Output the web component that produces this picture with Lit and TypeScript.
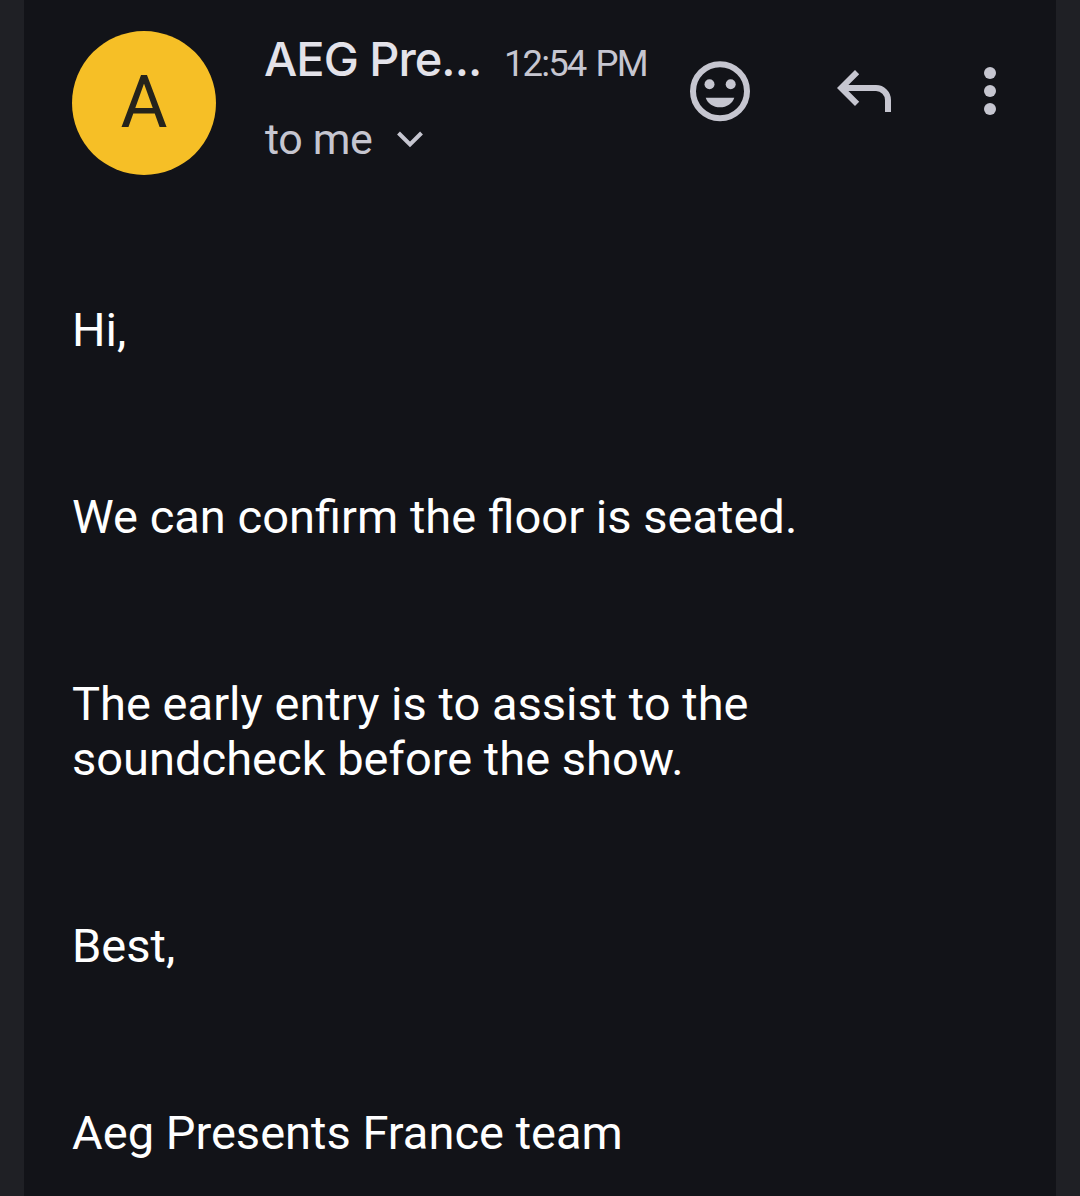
import { LitElement, html, css } from "lit";
import { customElement } from "lit/decorators.js";

const paragraphs = [
  "Hi,",
  "We can confirm the floor is seated.",
  "The early entry is to assist to the soundcheck before the show.",
  "Best,",
  "Aeg Presents France team",
];

@customElement("app-root")
class AppRoot extends LitElement {
  static styles = css`
    :host { display: block; height: 1196px; background: #1f2025; overflow: hidden; font-family: Roboto, sans-serif; }
    .card { box-sizing: border-box; margin: 0 24px; height: 1196px; background: #121318; padding: 31px 30px 0 48px; }
    header { display: flex; height: 144px; }
    .avatar { width: 144px; height: 144px; flex: none; border-radius: 50%; background: #f6bf26; color: #24231c; display: flex; align-items: center; justify-content: center; font-size: 72px; line-height: 144px; }
    .who { margin-left: 48px; flex: 1; min-width: 0; }
    .line { display: flex; align-items: baseline; white-space: nowrap; height: 60px; line-height: 60px; margin-top: -2px; }
    .name { color: #e3e2e9; font: 500 47px/60px Inter, sans-serif; letter-spacing: -1px; width: 240px; flex: none; }
    .time { color: #c6c6d0; font-size: 36.5px; letter-spacing: -1.9px; word-spacing: 3px; }
    .to { display: flex; align-items: center; gap: 24px; color: #c6c6d0; font-size: 43px; letter-spacing: -0.4px; line-height: 60px; margin: 20px 0 0 1px; white-space: nowrap; }
    svg { display: block; flex: none; fill: #c6c6d0; }
    .chevron { fill: none; stroke: #c6c6d0; stroke-width: 4; }
    .ring { fill: none; stroke: #c6c6d0; stroke-width: 6; }
    .icons { display: flex; margin-top: 24px; }
    .reply { margin: 0 54px 0 72px; }
    .body { padding-top: 127px; color: #fff; font-size: 47.06px; line-height: 55px; width: 760px; }
    p { margin: 0 0 132px; }
  `;
  render() {
    return html`<div class="card">
      <header>
        <div class="avatar">A</div>
        <div class="who">
          <div class="line"><span class="name">AEG Pre...</span><span class="time">12:54 PM</span></div>
          <div class="to">
            <span>to me</span>
            <svg class="chevron" width="28" height="18" viewBox="0 0 28 18"><path d="M2.5 3 14 14.5 25.5 3" /></svg>
          </div>
        </div>
        <div class="icons">
          <svg width="72" height="72" viewBox="0 0 72 72">
            <circle class="ring" cx="36" cy="36.3" r="27" />
            <circle cx="25.5" cy="29.2" r="5" /><circle cx="46.7" cy="29.2" r="5" />
            <path d="M21.7 42.7H50.3C48.5 48.5 42.7 52.3 36 52.3S23.5 48.5 21.7 42.7Z" />
          </svg>
          <svg class="reply" width="72" height="72" viewBox="0 0 72 72">
            <path d="M9 33 27 15 31.2 19.2 20.4 30H48A15 15 0 0 1 63 45V57H57V45A9 9 0 0 0 48 36H20.4L31.2 46.8 27 51Z" />
          </svg>
          <svg width="72" height="72" viewBox="0 0 72 72">
            <circle cx="36" cy="18" r="6" /><circle cx="36" cy="36" r="6" /><circle cx="36" cy="54" r="6" />
          </svg>
        </div>
      </header>
      <div class="body">${paragraphs.map((p) => html`<p>${p}</p>`)}</div>
    </div>`;
  }
}
